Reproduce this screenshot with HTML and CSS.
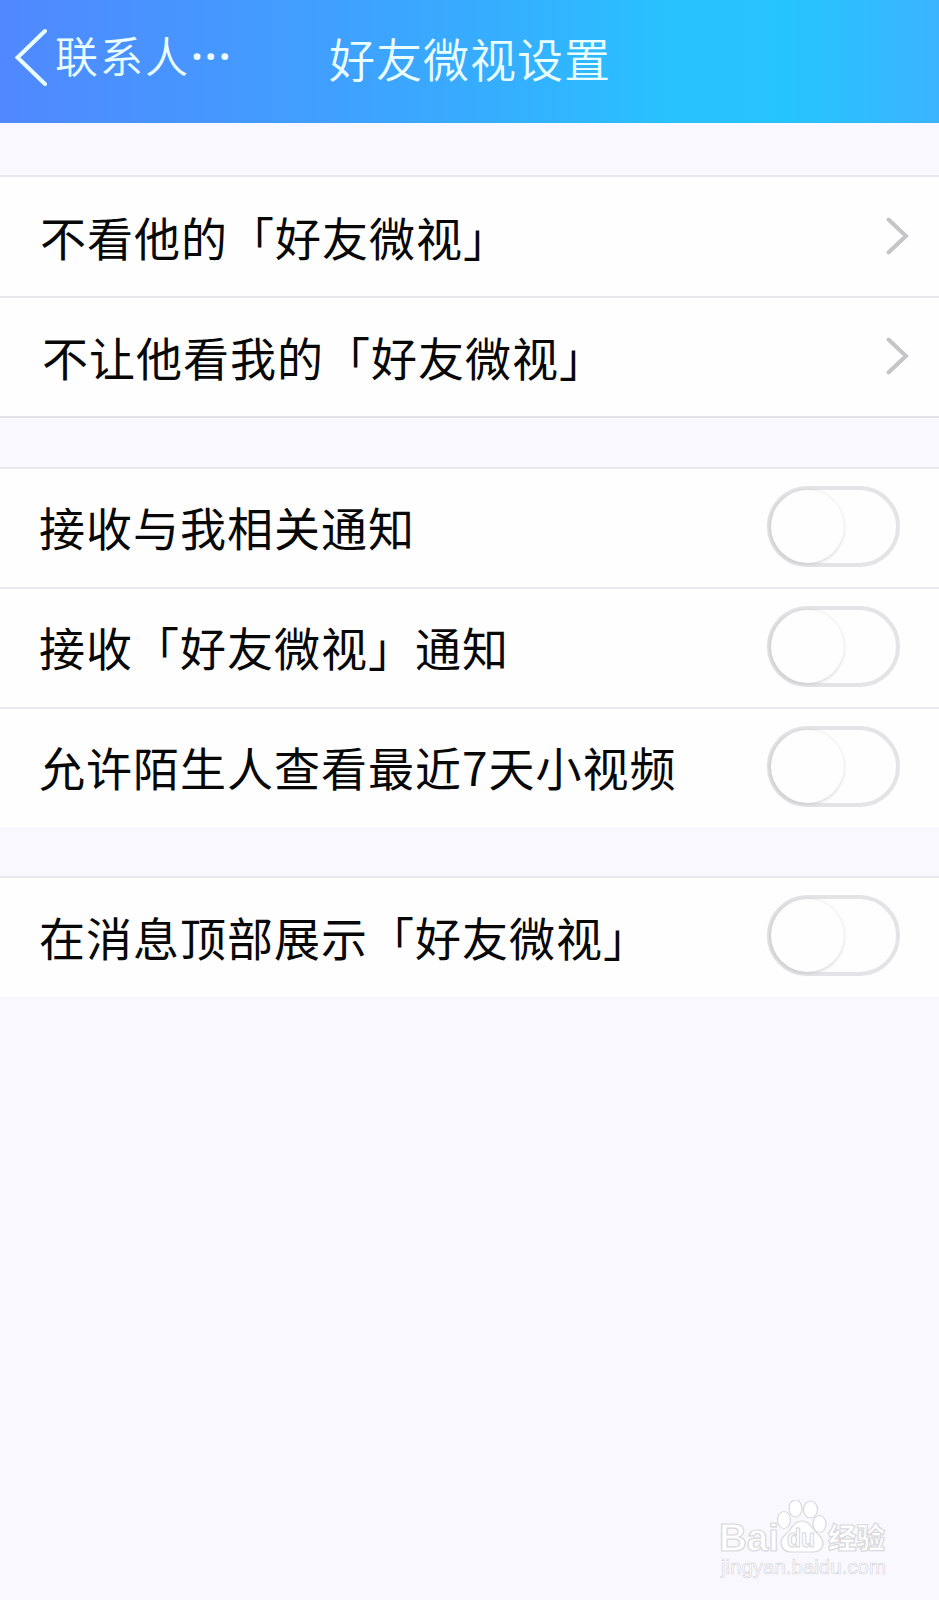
FILE: index.html
```html
<!DOCTYPE html>
<html lang="zh-CN">
<head>
<meta charset="utf-8">
<title>好友微视设置</title>
<link rel="stylesheet" href="styles.css">
</head>
<body>
<header class="bar">
  <a class="back">
    <svg class="back-icon" width="34" height="60" viewBox="0 0 34 60"><path d="M31 5 3.500 31.500 31 58"/></svg>
    <span>联系人</span><span class="dots">···</span>
  </a>
  <h1 class="title">好友微视设置</h1>
</header>
<main>
  <section class="group links">
    <div class="row"><span>不看他的「好友微视」</span><svg class="arrow" width="24" height="40" viewBox="0 0 24 40"><path d="M3.500 3.500 21 20 3.500 36.500"/></svg></div>
    <div class="row second"><span>不让他看我的「好友微视」</span><svg class="arrow" width="24" height="40" viewBox="0 0 24 40"><path d="M3.500 3.500 21 20 3.500 36.500"/></svg></div>
  </section>
  <section class="group">
    <div class="row"><span>接收与我相关通知</span><i class="switch"></i></div>
    <div class="row"><span>接收「好友微视」通知</span><i class="switch"></i></div>
    <div class="row"><span>允许陌生人查看最近7天小视频</span><i class="switch"></i></div>
  </section>
  <section class="group last">
    <div class="row"><span>在消息顶部展示「好友微视」</span><i class="switch"></i></div>
  </section>
</main>
<svg class="mark" width="180" height="90" viewBox="0 0 180 90">
  <g class="mark-shape">
    <text class="latin" x="-1" y="51" textLength="60" lengthAdjust="spacingAndGlyphs">Bai</text>
    <ellipse cx="64" cy="20" rx="6.500" ry="8.500"/>
    <ellipse cx="75.500" cy="8.500" rx="6.500" ry="8.500"/>
    <ellipse cx="90.500" cy="9.500" rx="7" ry="8.500"/>
    <ellipse cx="99.500" cy="24" rx="6.500" ry="8.500"/>
    <path d="M82 21c7 0 9 6 13 10s8 7 8 12c0 6-5 9-9 9H71c-6 0-10-4-10-10 0-5 5-7 8-11s6-10 13-10Z"/>
    <text class="du" x="67" y="47" textLength="28" lengthAdjust="spacingAndGlyphs">du</text>
    <text class="han" x="108" y="49" textLength="57" lengthAdjust="spacingAndGlyphs">经验</text>
    <text class="url" x="1" y="74" textLength="165" lengthAdjust="spacingAndGlyphs">jingyan.baidu.com</text>
  </g>
</svg>
</body>
</html>
```
FILE: styles.css
```css
* { box-sizing: border-box; }

body {
  margin: 0;
  height: 1600px;
  overflow: hidden;
  position: relative;
  background: #f9f8fe;
  color: #080808;
  font-family: "Noto Sans CJK SC", sans-serif;
}

.bar {
  height: 123px;
  display: flex;
  align-items: flex-start;
  background: linear-gradient(90deg, #5088ff 0%, #419eff 33%, #34b0ff 55%, #28c2ff 72%, #26c4ff 84%, #3bb4ff 100%);
  color: #eaffff;
  font-weight: 350;
}

.back {
  display: flex;
  width: 329px;
  padding: 26px 0 0 14px;
  font-size: 43px;
  line-height: 57px;
  letter-spacing: 2px;
}

.back-icon {
  margin-right: 7px;
  fill: none;
  stroke: #eaffff;
  stroke-width: 4;
  stroke-linecap: round;
}

.dots {
  margin-left: 1px;
  font-family: "Noto Sans", sans-serif;
  font-weight: 600;
  line-height: 59px;
}

.title {
  margin: 0;
  padding-top: 27px;
  font-size: 46px;
  font-weight: 350;
  line-height: 60px;
  letter-spacing: 1px;
}

.group {
  margin-top: 49px;
  background: #fefefe;
}

.links {
  margin-top: 52px;
  border-bottom: 2px solid #e4e3e8;
}

.row {
  height: 120px;
  display: flex;
  align-items: center;
  justify-content: space-between;
  padding: 0 39px 4px;
  border-top: 2px solid #e9e8ec;
  font-size: 46px;
  line-height: 60px;
  letter-spacing: 1px;
  white-space: nowrap;
}

.links .row { height: 121px; padding: 0 30px 2px 40px; }
.links .second { height: 120px; padding-left: 42px; }

.last .row { height: 121px; }

.arrow {
  fill: none;
  stroke: #c5c5c8;
  stroke-width: 4;
  stroke-linecap: round;
}

.switch {
  width: 133px;
  height: 81px;
  border: 4px solid #e4e3e5;
  border-radius: 41px;
}

.switch::before {
  content: "";
  display: block;
  width: 73px;
  height: 73px;
  border-radius: 50%;
  background: #fefefe;
  box-shadow: -1px 1px 4px #c4c4c6;
}

.mark {
  position: absolute;
  left: 720px;
  top: 1500px;
}

.mark-shape {
  fill: #fff;
  stroke: #d8d8dd;
  stroke-width: 1.2;
}

.latin { font: bold 38px "Liberation Sans", sans-serif; }
.du { font: bold 26px "Liberation Sans", sans-serif; }
.han { font: 900 29px "Noto Sans CJK SC", sans-serif; }
.url { font: 21px "Liberation Sans", sans-serif; stroke-width: 0.7; }
```
